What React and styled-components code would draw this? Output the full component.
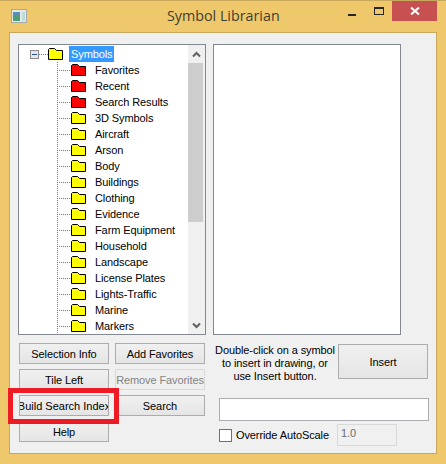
import React from 'react';
import styled, { createGlobalStyle } from 'styled-components';

const yellowFolders = [
  '3D Symbols', 'Aircraft', 'Arson', 'Body', 'Buildings', 'Clothing', 'Evidence',
  'Farm Equipment', 'Household', 'Landscape', 'License Plates', 'Lights-Traffic',
  'Marine', 'Markers',
];
const redFolders = ['Favorites', 'Recent', 'Search Results'];

const Folder = ({ color }) => (
  <FolderIcon width="15" height="12" viewBox="0 0 15 12">
    <path d="M0.5 11.5V1.5L1.5 0.5H6.5L8.5 2.5H14.5V11.5Z" fill={color} stroke="#000" strokeWidth="1" />
  </FolderIcon>
);

const Chevron = ({ down }) => (
  <svg width="9" height="7" viewBox="0 0 9 7">
    <path d={down ? 'M1 1.5L4.5 5L8 1.5' : 'M1 5.5L4.5 2L8 5.5'} fill="none" stroke="#5f5f5f" strokeWidth="2" />
  </svg>
);

const App = () => (
  <Window>
    <GlobalStyle />
    <TitleBar>
      <AppIcon>
        <svg width="16" height="14" viewBox="0 0 16 14">
          <rect x="0.5" y="0.5" width="15" height="13" fill="#e6e8e8" stroke="#a4a8a8" />
          <rect x="2" y="3" width="7" height="4" fill="#5a8fb0" />
          <rect x="2" y="7" width="7" height="5" fill="#4f9e78" />
          <rect x="11" y="3" width="3" height="9" fill="#bcdcdc" />
        </svg>
      </AppIcon>
      <Title>Symbol Librarian</Title>
      <Controls>
        <Minimize />
        <Maximize />
        <Close>
          <svg width="10" height="8" viewBox="0 0 10 8">
            <path d="M1 0.5L9 7.5M9 0.5L1 7.5" stroke="#fff" strokeWidth="2" />
          </svg>
        </Close>
      </Controls>
    </TitleBar>
    <Client>
      <Lists>
        <ListBox>
          <Tree>
            <RootRow>
              <Expander />
              <RootDots />
              <Folder color="#ffff00" />
              <RootLabel>Symbols</RootLabel>
            </RootRow>
            {redFolders.map((name) => (
              <TreeRow key={name}>
                <Connector />
                <Folder color="#ff0000" />
                <Label>{name}</Label>
              </TreeRow>
            ))}
            {yellowFolders.map((name) => (
              <TreeRow key={name}>
                <Connector />
                <Folder color="#ffff00" />
                <Label>{name}</Label>
              </TreeRow>
            ))}
          </Tree>
          <ScrollBar>
            <ArrowBox><Chevron /></ArrowBox>
            <Thumb />
            <Track />
            <ArrowBox><Chevron down /></ArrowBox>
          </ScrollBar>
        </ListBox>
        <ListBox />
      </Lists>
      <Lower>
        <ButtonGrid>
          <Button>Selection Info</Button>
          <Button>Add Favorites</Button>
          <Button>Tile Left</Button>
          <Button disabled>Remove Favorites</Button>
          <Marked>
            <WideButton>Build Search Index</WideButton>
            <RedMark />
          </Marked>
          <Button>Search</Button>
          <Button>Help</Button>
        </ButtonGrid>
        <RightSide>
          <InsertRow>
            <Hint>
              Double-click on a symbol<br />to insert in drawing, or<br />use Insert button.
            </Hint>
            <InsertButton>Insert</InsertButton>
          </InsertRow>
          <SearchBox />
          <ScaleRow>
            <Check />
            <CheckLabel>Override AutoScale</CheckLabel>
            <ScaleBox>1.0</ScaleBox>
          </ScaleRow>
        </RightSide>
      </Lower>
    </Client>
  </Window>
);

const GlobalStyle = createGlobalStyle`
  html, body {
    margin: 0;
    padding: 0;
    background: #f0c86c;
  }
  * {
    box-sizing: border-box;
  }
`;

const Window = styled.div`
  width: 446px;
  height: 464px;
  background: #f0c86c;
  border-top: 1px solid #c8a85c;
  font-family: "Liberation Sans", Arial, sans-serif;
  font-size: 11px;
  letter-spacing: -0.1px;
  color: #000;
  overflow: hidden;
`;

const TitleBar = styled.div`
  display: flex;
  align-items: flex-start;
  height: 31px;
  padding-left: 11px;
`;

const AppIcon = styled.div`
  width: 16px;
  height: 14px;
  margin-top: 8px;
`;

const Title = styled.div`
  flex: 1;
  margin-top: 5px;
  padding-left: 140px;
  font-family: "Open Sans", sans-serif;
  font-size: 14.3px;
  letter-spacing: 0;
  line-height: 20px;
  color: #3f3f30;
`;

const Controls = styled.div`
  display: flex;
  align-items: flex-start;
  margin-right: 9px;
`;

const Minimize = styled.div`
  width: 8px;
  height: 2px;
  margin: 13px 18px 0 0;
  background: #262626;
`;

const Maximize = styled.div`
  width: 10px;
  height: 8px;
  margin: 6px 8px 0 0;
  border: 1px solid #262626;
  border-top-width: 2px;
`;

const Close = styled.div`
  display: flex;
  align-items: center;
  justify-content: center;
  width: 45px;
  height: 20px;
  background: #c75050;
`;

const Client = styled.div`
  width: 428px;
  height: 422px;
  margin-left: 9px;
  padding: 11px 0 0 8px;
  background: #f0f0f0;
  border: 1px solid #c8a85c;
`;

const Lists = styled.div`
  display: flex;
  gap: 7px;
`;

const ListBox = styled.div`
  display: flex;
  width: 188px;
  height: 291px;
  background: #fff;
  border: 1px solid #828790;
  overflow: hidden;
`;

const Tree = styled.div`
  flex: 1;
  padding-top: 1px;
`;

const TreeRow = styled.div`
  display: flex;
  align-items: center;
  height: 16px;
  padding-left: 38px;
`;

const RootRow = styled(TreeRow)`
  padding-left: 11px;
`;

const Connector = styled.span`
  align-self: stretch;
  width: 14px;
  background:
    repeating-linear-gradient(to bottom, #7a7a7a 0 1px, transparent 1px 2px) left / 1px 100% no-repeat,
    repeating-linear-gradient(to right, #7a7a7a 0 1px, transparent 1px 2px) left 8px / 100% 1px no-repeat;
`;

const RootDots = styled.span`
  width: 9px;
  height: 1px;
  background: repeating-linear-gradient(to right, #7a7a7a 0 1px, transparent 1px 2px);
`;

const Expander = styled.span`
  position: relative;
  width: 9px;
  height: 9px;
  border: 1px solid #8a8a8a;
  background: #e6e6e6;

  &::after {
    content: "";
    position: absolute;
    left: 1px;
    top: 3px;
    width: 5px;
    height: 1px;
    background: #2f4f9f;
  }
`;

const FolderIcon = styled.svg`
  flex: none;
`;

const Label = styled.span`
  margin-left: 9px;
  white-space: nowrap;
`;

const RootLabel = styled.span`
  margin-left: 6px;
  padding: 0 2px;
  line-height: 16px;
  color: #fff;
  background: #3399ff;
`;

const ScrollBar = styled.div`
  display: flex;
  flex-direction: column;
  width: 17px;
  background: #f0f0f0;
`;

const ArrowBox = styled.div`
  display: flex;
  align-items: center;
  justify-content: center;
  height: 18px;
`;

const Thumb = styled.div`
  width: 15px;
  height: 159px;
  background: #cdcdcd;
`;

const Track = styled.div`
  flex: 1;
`;

const Lower = styled.div`
  display: flex;
  margin-top: 8px;
  padding-left: 1px;
`;

const ButtonGrid = styled.div`
  display: grid;
  grid-template-columns: 90px 90px;
  grid-auto-rows: 21px;
  gap: 5px 6px;
  align-content: start;
`;

const Button = styled.div`
  display: flex;
  align-items: center;
  justify-content: center;
  overflow: hidden;
  white-space: nowrap;
  color: ${(p) => (p.disabled ? '#838383' : '#000')};
  background: ${(p) => (p.disabled ? '#efefef' : 'linear-gradient(#f0f0f0, #e5e5e5)')};
  border: 1px solid ${(p) => (p.disabled ? '#d9d9d9' : '#acacac')};
`;

const WideButton = styled(Button)`
  letter-spacing: 0;
`;

const Marked = styled.div`
  position: relative;
  display: grid;
`;

const RedMark = styled.div`
  position: absolute;
  left: -11px;
  top: -7px;
  width: 111px;
  height: 36px;
  border: 5px solid #ed1c24;
`;

const RightSide = styled.div`
  margin-left: 14px;
  width: 214px;
`;

const InsertRow = styled.div`
  display: flex;
  gap: 3px;
  padding-top: 1px;
`;

const Hint = styled.div`
  flex: none;
  width: 120px;
  margin-left: -4px;
  text-align: center;
  line-height: 13px;
  white-space: nowrap;
`;

const InsertButton = styled(Button)`
  width: 90px;
  height: 35px;
`;

const SearchBox = styled.div`
  width: 210px;
  height: 23px;
  margin-top: 15px;
  background: #fff;
  border: 1px solid #abadb3;
`;

const ScaleRow = styled.div`
  display: flex;
  align-items: center;
  height: 22px;
  margin-top: 3px;
`;

const Check = styled.span`
  flex: none;
  width: 13px;
  height: 13px;
  background: #fff;
  border: 1px solid #707070;
`;

const CheckLabel = styled.span`
  flex: none;
  width: 101px;
  margin-left: 4px;
  white-space: nowrap;
`;

const ScaleBox = styled.div`
  flex: none;
  width: 60px;
  height: 22px;
  padding: 2px 3px;
  color: #6d6d6d;
  background: #f0f0f0;
  border: 1px solid #d9d9d9;
`;

export default App;
